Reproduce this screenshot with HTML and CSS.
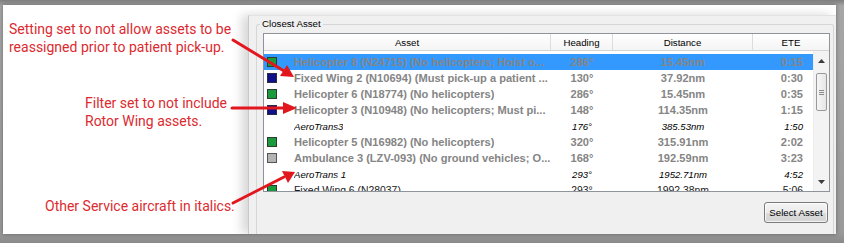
FILE: index.html
```html
<!DOCTYPE html>
<html>
<head>
<meta charset="utf-8">
<link rel="stylesheet" href="styles.css">
</head>
<body>
<div class="frame">
  <div class="notes">
    <p class="note n1">Setting set to not allow assets to be<br>reassigned prior to patient pick-up.</p>
    <p class="note n2">Filter set to not include<br>Rotor Wing assets.</p>
    <p class="note n3">Other Service aircraft in italics.</p>
  </div>
  <div class="dialog">
    <div class="group">
      <div class="legend">Closest Asset</div>
      <div class="list">
        <div class="header">
          <div class="hc c-asset">Asset</div>
          <div class="hc c-head">Heading</div>
          <div class="hc c-dist">Distance</div>
          <div class="hc c-ete-h">ETE</div>
        </div>
        <div class="lbody">
          <div class="rows">
            <div class="row sel bold"><span class="c-asset"><i class="sq green"></i><span class="name">Helicopter 8 (N24715) (No helicopters; Hoist o...</span></span><span class="c-head">286°</span><span class="c-dist">15.45nm</span><span class="c-ete">0:15</span></div>
            <div class="row bold"><span class="c-asset"><i class="sq navy"></i><span class="name">Fixed Wing 2 (N10694) (Must pick-up a patient ...</span></span><span class="c-head">130°</span><span class="c-dist">37.92nm</span><span class="c-ete">0:30</span></div>
            <div class="row bold"><span class="c-asset"><i class="sq green"></i><span class="name">Helicopter 6 (N18774) (No helicopters)</span></span><span class="c-head">286°</span><span class="c-dist">15.45nm</span><span class="c-ete">0:35</span></div>
            <div class="row bold"><span class="c-asset"><i class="sq navy"></i><span class="name">Helicopter 3 (N10948) (No helicopters; Must pi...</span></span><span class="c-head">148°</span><span class="c-dist">114.35nm</span><span class="c-ete">1:15</span></div>
            <div class="row ital"><span class="c-asset"><i class="sq none"></i><span class="name">AeroTrans3</span></span><span class="c-head">176°</span><span class="c-dist">385.53nm</span><span class="c-ete">1:50</span></div>
            <div class="row bold"><span class="c-asset"><i class="sq green"></i><span class="name">Helicopter 5 (N16982) (No helicopters)</span></span><span class="c-head">320°</span><span class="c-dist">315.91nm</span><span class="c-ete">2:02</span></div>
            <div class="row bold"><span class="c-asset"><i class="sq gray"></i><span class="name">Ambulance 3 (LZV-093) (No ground vehicles; O...</span></span><span class="c-head">168°</span><span class="c-dist">192.59nm</span><span class="c-ete">3:23</span></div>
            <div class="row ital"><span class="c-asset"><i class="sq none"></i><span class="name">AeroTrans 1</span></span><span class="c-head">293°</span><span class="c-dist">1952.71nm</span><span class="c-ete">4:52</span></div>
            <div class="row plain"><span class="c-asset"><i class="sq green"></i><span class="name">Fixed Wing 6 (N28037)</span></span><span class="c-head">293°</span><span class="c-dist">1992.38nm</span><span class="c-ete">5:06</span></div>
          </div>
          <div class="scrollbar">
            <div class="sb-btn"><svg width="7" height="4" viewBox="0 0 7 4"><path d="M0 4 L3.5 0 L7 4 Z" fill="#3c3c3c"/></svg></div>
            <div class="sb-thumb"><span class="grip"></span><span class="grip"></span><span class="grip"></span></div>
            <div class="sb-track"></div>
            <div class="sb-btn"><svg width="7" height="4" viewBox="0 0 7 4"><path d="M0 0 L3.5 4 L7 0 Z" fill="#3c3c3c"/></svg></div>
          </div>
        </div>
      </div>
      <div class="actions"><button class="btn">Select Asset</button></div>
    </div>
  </div>
</div>
<svg class="arrows" width="844" height="243" viewBox="0 0 844 243">
  <g stroke="#e2171e" stroke-width="3" stroke-linecap="round">
    <line x1="233" y1="40" x2="284" y2="71"/>
    <line x1="232" y1="108" x2="284" y2="108"/>
    <line x1="233" y1="203" x2="284" y2="177"/>
  </g>
  <g fill="#e2171e">
    <path d="M294 77 L280 76 L287 65 Z"/>
    <path d="M297 108 L283 102 L283 114 Z"/>
    <path d="M295 172 L288 183 L282 171 Z"/>
  </g>
</svg>
</body>
</html>
```
FILE: styles.css
```css
html, body {
  margin: 0;
  padding: 0;
}
body {
  position: relative;
  width: 844px;
  height: 243px;
  overflow: hidden;
  background: linear-gradient(#7e7e7e, #a6a6a6 6px, #9a9a9a 232px, #8a8a8a);
  padding: 5px 8px 9px 3px;
  box-sizing: border-box;
  font-family: "Liberation Sans", Arial, sans-serif;
}
.frame {
  display: flex;
  height: 229px;
  background: #fff;
  overflow: hidden;
  box-shadow: 0 0 4px rgba(0,0,0,0.35);
}
.notes {
  width: 245px;
  flex: none;
  display: flex;
  flex-direction: column;
  align-items: flex-start;
}
.note {
  margin: 0;
  color: #dc2a2f;
  font-family: Roboto, "Liberation Sans", sans-serif;
  font-size: 14px;
  line-height: 18px;
  white-space: nowrap;
}
.n1 { margin: 15px 0 0 6px; }
.n2 { margin: 38px 0 0 82px; }
.n3 { margin: 67px 0 0 42px; }

.dialog {
  flex: 1;
  margin-top: 10px;
  background: #f0f0f0;
  border-top: 1px solid #e2e2e2;
  border-left: 1px solid #c9c9c9;
  box-shadow: -6px 0 10px rgba(0,0,0,0.16);
  padding: 8px 2px 0 7px;
  font-size: 9.7px;
  color: #000;
}
.group {
  border: 1px solid #d6d6d6;
  border-bottom: none;
  border-radius: 3px 3px 0 0;
  height: 220px;
  padding: 8px 3px 0 6px;
  box-sizing: border-box;
  position: relative;
}
.legend {
  position: absolute;
  top: -7px;
  left: 3px;
  padding: 0 2px;
  background: #f0f0f0;
  line-height: 12px;
}
.list {
  border: 1px solid #8f949c;
  background: #fff;
  height: 159px;
  box-sizing: border-box;
  display: flex;
  flex-direction: column;
}
.header {
  display: flex;
  height: 17px;
  flex: none;
  background: linear-gradient(#ffffff, #f4f4f4);
  border-bottom: 1px solid #d5d5d5;
  box-sizing: border-box;
}
.hc {
  display: flex;
  align-items: center;
  justify-content: center;
  border-right: 1px solid #dcdcdc;
  box-sizing: border-box;
}
.c-asset { width: 287px; flex: none; }
.c-head { width: 62px; flex: none; }
.c-dist { width: 140px; flex: none; }
.c-ete { width: 60px; flex: none; }
.c-ete-h { flex: 1; border-right: none; }

.lbody {
  flex: 1;
  display: flex;
  min-height: 0;
}
.rows {
  width: 549px;
  flex: none;
  overflow: hidden;
  padding-top: 3px;
}
.row {
  display: flex;
  height: 16px;
  align-items: center;
  white-space: nowrap;
}
.row > span { display: flex; align-items: center; justify-content: center; overflow: hidden; }
.row > .c-asset { justify-content: flex-start; padding-left: 3px; box-sizing: border-box; }
.row > .c-ete { justify-content: flex-end; padding-right: 10px; box-sizing: border-box; }
.row.sel { background: #3399ff; }
.bold { font-weight: bold; color: #858585; font-size: 11.1px; }
.ital { font-style: italic; color: #000; font-size: 9.6px; }
.plain { color: #1a1a1a; font-size: 10.4px; }
.name { overflow: hidden; }

.sq {
  display: block;
  width: 10px;
  height: 10px;
  box-sizing: border-box;
  margin-right: 17px;
  flex: none;
}
.sq.green { background: #1b9a3d; border: 1px solid #2d3a2f; }
.sq.navy { background: #10108a; border: 1px solid #2a2a40; }
.sq.gray { background: #b4b4b4; border: 1px solid #555; }
.sq.none { visibility: hidden; }

.scrollbar {
  flex: 1;
  display: flex;
  flex-direction: column;
  align-items: center;
  background: #f3f3f3;
  border-left: 1px solid #ececec;
}
.sb-btn {
  height: 19px;
  display: flex;
  align-items: center;
  justify-content: center;
  flex: none;
}
.sb-thumb {
  width: 11px;
  height: 38px;
  margin-top: 3px;
  box-sizing: border-box;
  border: 1px solid #9a9a9a;
  border-radius: 2px;
  background: linear-gradient(90deg, #f6f6f6, #e6e6e6);
  display: flex;
  flex-direction: column;
  align-items: center;
  justify-content: center;
  gap: 1px;
}
.grip {
  width: 5px;
  height: 1px;
  background: #8a8a8a;
}
.sb-track { flex: 1; }

.actions {
  display: flex;
  justify-content: flex-end;
  padding: 10px 2px 0 0;
}
.btn {
  width: 64px;
  height: 21px;
  padding: 0;
  font-family: "Liberation Sans", Arial, sans-serif;
  font-size: 9.7px;
  color: #000;
  border: 1px solid #7a7a7a;
  border-radius: 3px;
  background: linear-gradient(#f4f4f4, #ebebeb 50%, #dcdcdc 51%, #d4d4d4);
  box-shadow: inset 0 0 0 1px rgba(255,255,255,0.7);
}

.arrows {
  position: absolute;
  top: 0;
  left: 0;
}
```
